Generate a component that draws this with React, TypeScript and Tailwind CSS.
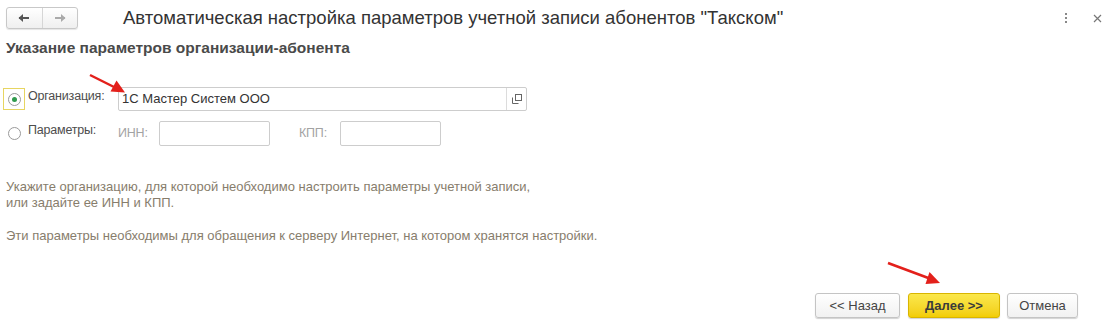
import React from 'react';

function Radio({ checked }: { checked?: boolean }) {
    return (
        <span className="w-[13px] h-[13px] rounded-full border border-[#9a9a9a] bg-white flex items-center justify-center">
            {checked && <span className="w-[5px] h-[5px] rounded-full bg-[#2f9a4c]" />}
        </span>
    );
}

function Btn({ children, w, primary }: { children: React.ReactNode; w: string; primary?: boolean }) {
    return (
        <div
            className={`${w} h-[25px] rounded-[3px] border flex items-center justify-center text-[13px] shadow-[0_1px_1px_rgba(0,0,0,0.18)] ${
                primary
                    ? 'bg-gradient-to-b from-[#fbe84a] to-[#f2cd00] border-[#d9b500] font-bold text-[#3b3b3b]'
                    : 'bg-gradient-to-b from-white to-[#f1f1f1] border-[#c4c4c4] text-[#444]'
            }`}
        >
            {children}
        </div>
    );
}

export default function App() {
    return (
        <div className="w-[1116px] h-[335px] bg-white relative flex flex-col font-['Liberation_Sans',Arial,sans-serif] text-[#4d4d4d] select-none">
            {/* Header */}
            <div className="h-[36px] flex items-center pl-[6px] pr-[14px]">
                <div className="w-[72px] h-[22px] flex rounded-[3px] border border-[#c8c8c8] bg-gradient-to-b from-white to-[#efefef] shadow-[0_1px_1px_rgba(0,0,0,0.1)]">
                    <div className="flex-1 flex items-center justify-center border-r border-[#d6d6d6]">
                        <svg width="12" height="10" viewBox="0 0 12 10">
                            <path d="M1 5h10" stroke="#555" strokeWidth="2" />
                            <path d="M0.5 5L5 1v8z" fill="#555" />
                        </svg>
                    </div>
                    <div className="flex-1 flex items-center justify-center">
                        <svg width="12" height="10" viewBox="0 0 12 10">
                            <path d="M1 5h10" stroke="#aaa" strokeWidth="2" />
                            <path d="M11.5 5L7 1v8z" fill="#aaa" />
                        </svg>
                    </div>
                </div>
                <span className="ml-[45px] text-[18.5px] text-[#333]">
                    Автоматическая настройка параметров учетной записи абонентов "Такском"
                </span>
                <div className="ml-auto flex items-center gap-[26px]">
                    <div className="flex flex-col gap-[2px]">
                        <span className="w-[2px] h-[2px] bg-[#888]" />
                        <span className="w-[2px] h-[2px] bg-[#888]" />
                        <span className="w-[2px] h-[2px] bg-[#888]" />
                    </div>
                    <svg width="9" height="9" viewBox="0 0 9 9">
                        <path d="M1 1l7 7M8 1l-7 7" stroke="#777" strokeWidth="1.2" />
                    </svg>
                </div>
            </div>

            {/* Section title */}
            <div className="mt-[4px] pl-[6px] text-[15.5px] leading-[16px] font-bold text-[#4a4a4a]">
                Указание параметров организации-абонента
            </div>

            {/* Row 1 */}
            <div className="mt-[31px] pl-[3px] flex items-center text-[12.5px] tracking-[-0.2px]">
                <div className="w-[22px] h-[22px] border border-[#e7d561] flex items-center justify-center">
                    <Radio checked />
                </div>
                <span className="ml-[3px] w-[90px] -mt-[6px]">Организация:</span>
                <div className="w-[409px] h-[24px] flex border border-[#cdcdcd] rounded-[2px] tracking-normal">
                    <span className="flex-1 pl-[3px] flex items-center text-[13px] text-[#333]">1С Мастер Систем ООО</span>
                    <div className="w-[20px] border-l border-[#dcdcdc] flex items-center justify-center">
                        <svg width="10" height="10" viewBox="0 0 10 10">
                            <rect x="3.5" y="0.5" width="6" height="6" fill="none" stroke="#666" />
                            <path d="M0.5 3.5v6h6" fill="none" stroke="#666" />
                        </svg>
                    </div>
                </div>
            </div>

            {/* Row 2 */}
            <div className="mt-[10px] pl-[3px] flex items-center text-[12.5px] tracking-[-0.2px]">
                <div className="w-[22px] h-[22px] flex items-center justify-center">
                    <Radio />
                </div>
                <span className="ml-[3px] w-[90px] -mt-[6px]">Параметры:</span>
                <span className="w-[41px] text-[#a3a3a3]">ИНН:</span>
                <div className="w-[111px] h-[25px] border border-[#cdcdcd] rounded-[2px]" />
                <span className="ml-[29px] w-[41px] text-[#a3a3a3]">КПП:</span>
                <div className="w-[101px] h-[25px] border border-[#cdcdcd] rounded-[2px]" />
            </div>

            {/* Help text */}
            <div className="mt-[33px] pl-[6px] text-[13px] leading-[16px] text-[#877d6c]">
                <div>Укажите организацию, для которой необходимо настроить параметры учетной записи,</div>
                <div>или задайте ее ИНН и КПП.</div>
                <div className="mt-[17px]">Эти параметры необходимы для обращения к серверу Интернет, на котором хранятся настройки.</div>
            </div>

            {/* Buttons */}
            <div className="mt-auto mb-[17px] pr-[38px] flex justify-end">
                <Btn w="w-[85px]">&lt;&lt; Назад</Btn>
                <div className="ml-[8px]">
                    <Btn w="w-[92px]" primary>Далее &gt;&gt;</Btn>
                </div>
                <div className="ml-[7px]">
                    <Btn w="w-[71px]">Отмена</Btn>
                </div>
            </div>

            {/* Annotation arrows */}
            <svg className="absolute inset-0 pointer-events-none" width="1116" height="335">
                <line x1="90" y1="75" x2="116" y2="88" stroke="#e3201b" strokeWidth="2.5" />
                <path d="M125 92.5L110.5 91.5L116.5 80.5z" fill="#e3201b" />
                <line x1="888" y1="263" x2="931" y2="279" stroke="#e3201b" strokeWidth="2.5" />
                <path d="M940 283L925.5 284L929.5 272z" fill="#e3201b" />
            </svg>
        </div>
    );
}
